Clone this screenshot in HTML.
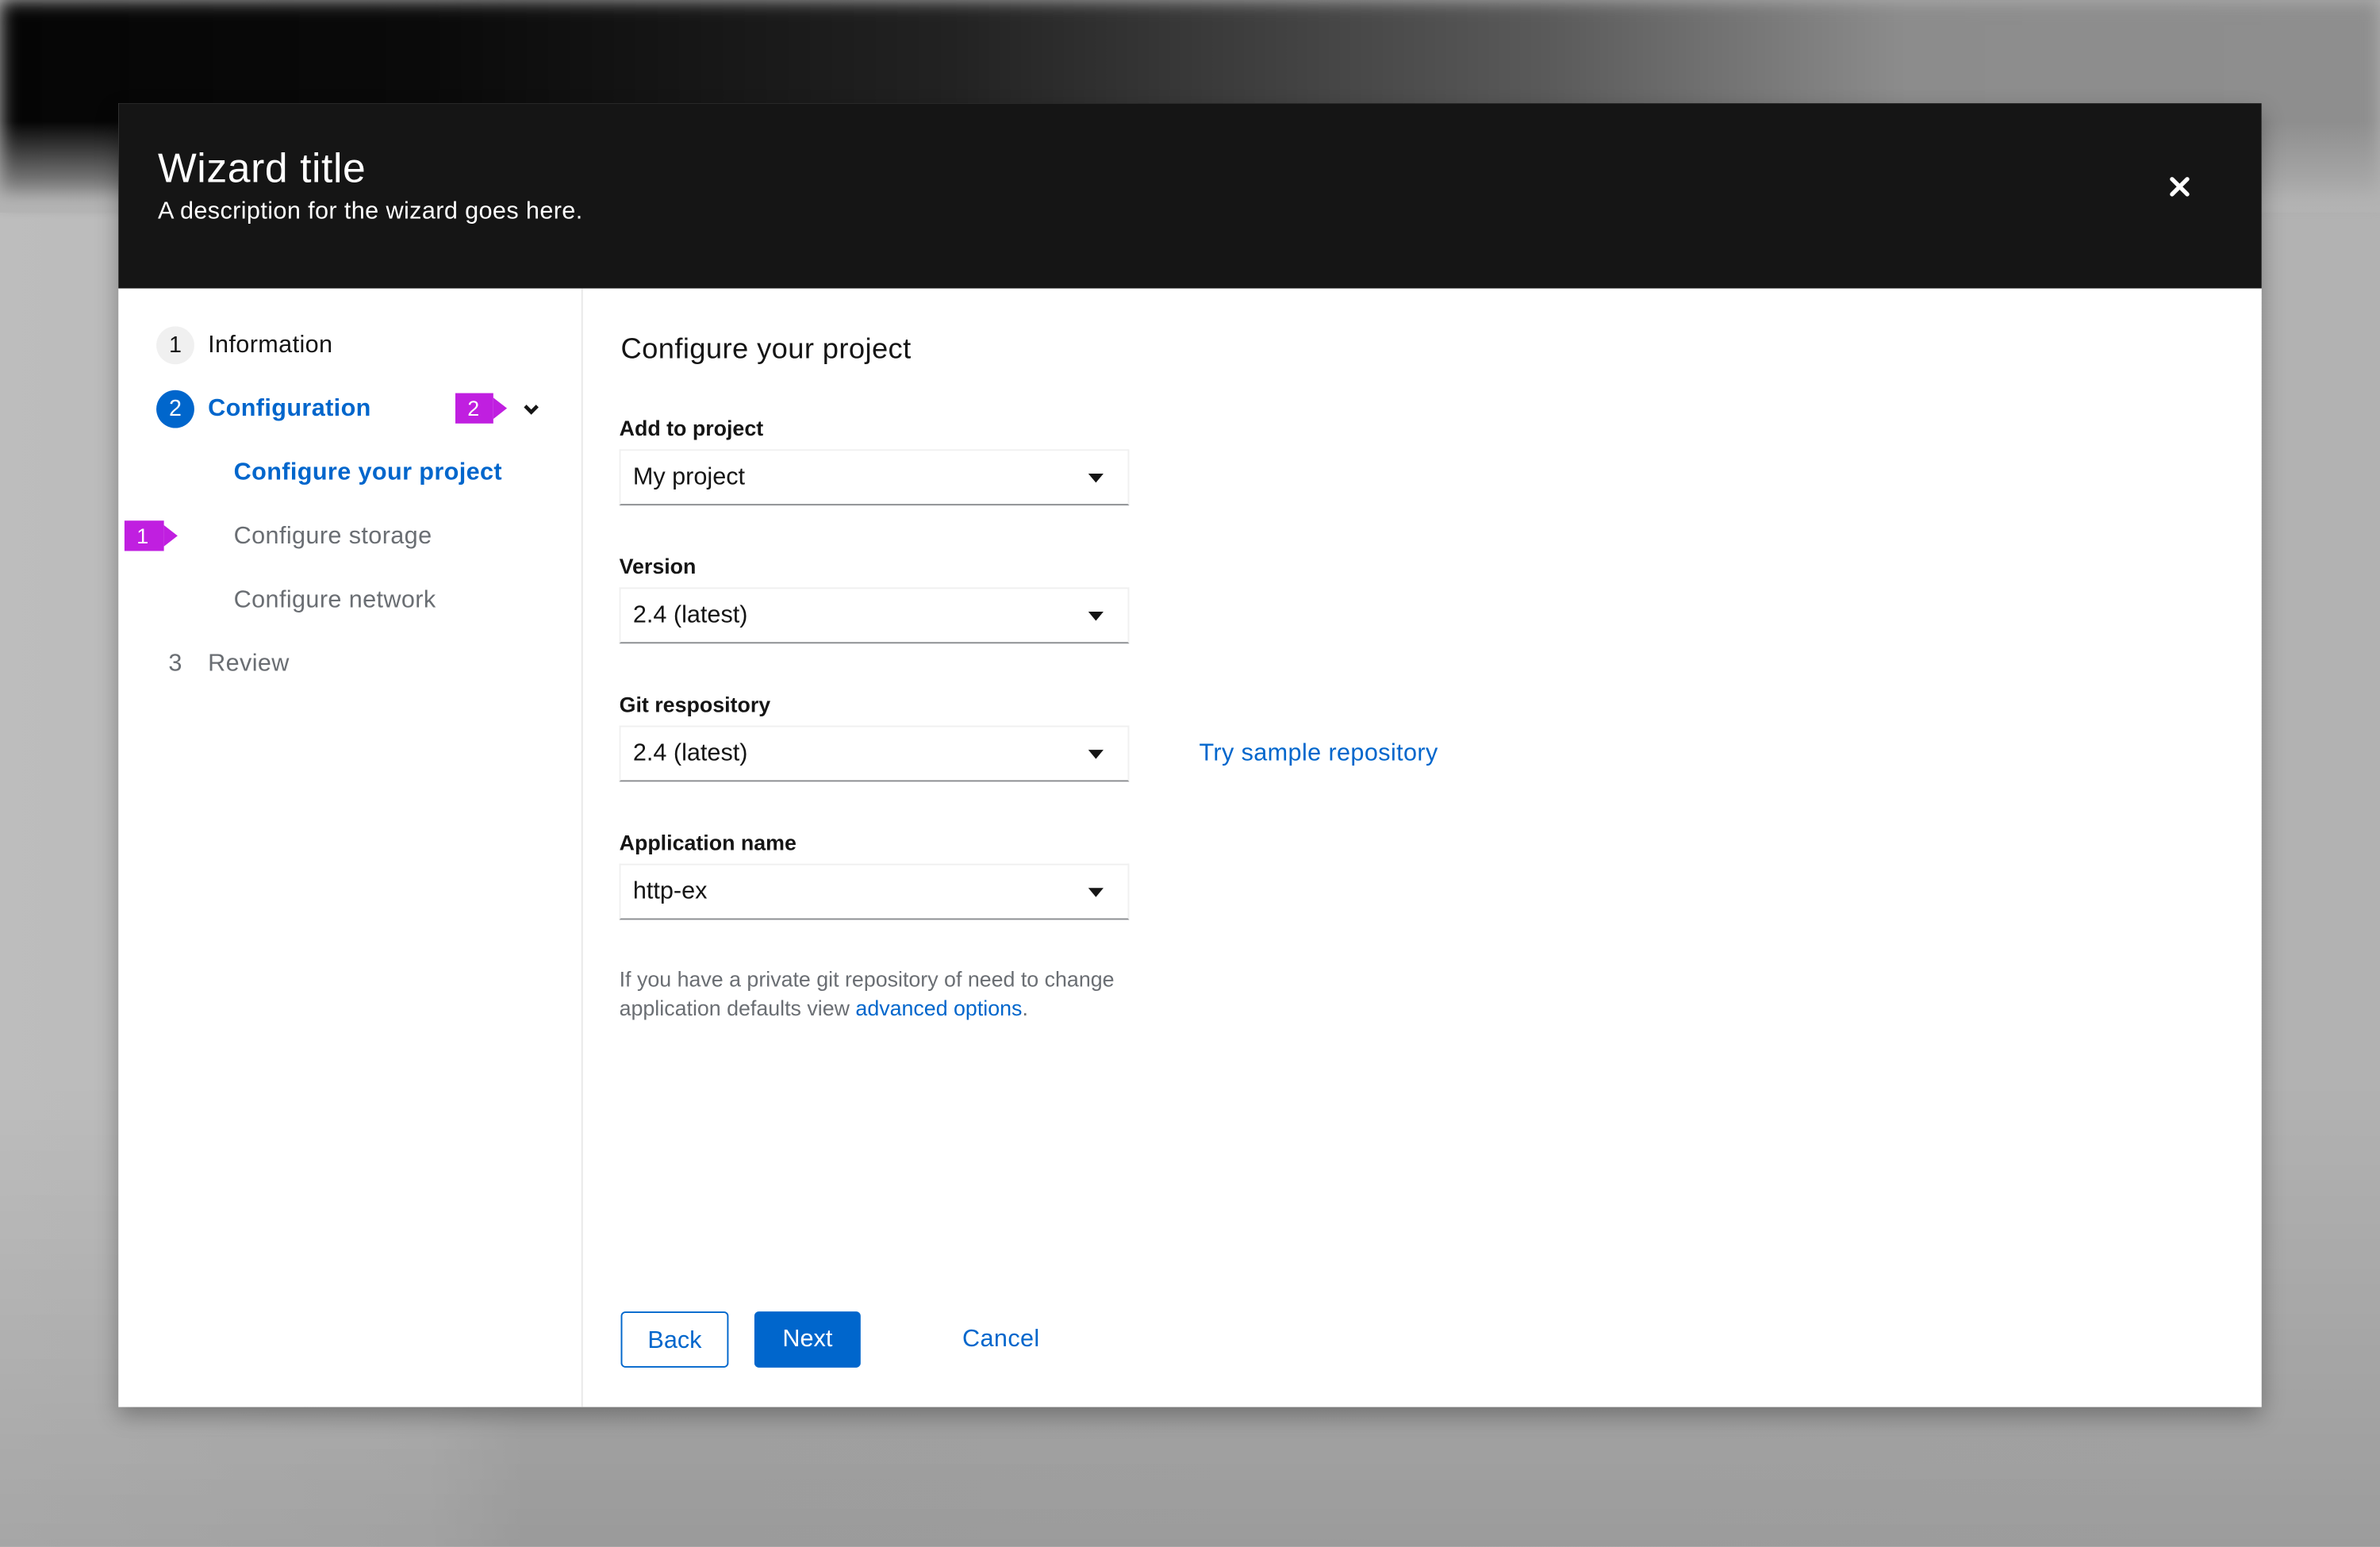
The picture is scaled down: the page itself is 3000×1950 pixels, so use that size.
<!DOCTYPE html>
<html><head><meta charset="utf-8"><style>
html,body{margin:0;padding:0;width:3000px;height:1950px;overflow:hidden;background:#b0b0b0}
#w{position:absolute;left:0;top:0;width:1568px;height:1019.2px;transform:scale(1.91327);transform-origin:0 0;font-family:"Liberation Sans",sans-serif;overflow:hidden;
background:linear-gradient(180deg,rgba(0,0,0,0) 0,rgba(0,0,0,0) 70%,rgba(0,0,0,.12) 100%),linear-gradient(90deg,#bdbdbd 0,#b8b8b8 18%,#b0b0b0 22%,#b2b2b2 100%)}
.topband{position:absolute;left:0;top:0;width:1568px;height:130px;background:linear-gradient(90deg,#050505 0,#0a0a0a 18%,#222 40%,#5a5a5a 65%,#8c8c8c 80%,#8e8e8e 100%);filter:blur(6px)}
.topfade{position:absolute;left:0;top:80px;width:1568px;height:60px;background:linear-gradient(180deg,rgba(176,176,176,0),#b3b3b3)}
.modal{position:absolute;left:78px;top:68px;width:1412px;height:859px;background:#fff;box-shadow:0 6px 14px rgba(0,0,0,.3)}
.hdr{position:absolute;left:0;top:0;width:1412px;height:122px;background:#151515;color:#fff}
.hdr h1{position:absolute;left:26px;top:28px;margin:0;font-weight:normal;font-size:27px;letter-spacing:.3px}
.hdr p{position:absolute;left:26px;top:63px;margin:0;font-size:16px;letter-spacing:.2px}
.x{position:absolute;left:1350px;top:47px;width:16px;height:16px}
.nav{position:absolute;left:0;top:122px;width:305px;height:737px;border-right:1px solid #e8e8e8}
.t{position:absolute;font-size:16px;white-space:nowrap;letter-spacing:.2px}
.c{position:absolute;width:25px;height:25px;border-radius:50%;font-size:15px;text-align:center;line-height:25px}
.badge{position:absolute;height:20px;background:#c01fe0;color:#fff;font-size:14px;line-height:20px;padding-left:8px;box-sizing:border-box}
.badge:after{content:"";position:absolute;right:-9px;top:3px;border-left:9px solid #c01fe0;border-top:7px solid transparent;border-bottom:7px solid transparent}
.lbl{position:absolute;left:330px;font-size:14px;font-weight:bold;color:#151515}
.sel{position:absolute;left:330px;width:336px;height:37px;box-sizing:border-box;border:1px solid #f0f0f0;border-bottom:1px solid #8a8d90;font-size:16px;color:#151515;line-height:35px;padding-left:8px}
.sel:after{content:"";position:absolute;right:16px;top:15px;border-top:6px solid #151515;border-left:5px solid transparent;border-right:5px solid transparent}
.btn{position:absolute;top:796px;height:37px;box-sizing:border-box;border-radius:3px;font-size:16px;line-height:37px;text-align:center}
</style></head><body><div id="w">
<div class="topband"></div><div class="topfade"></div>
<div class="modal">
 <div class="hdr"><h1>Wizard title</h1><p>A description for the wizard goes here.</p>
  <svg class="x" viewBox="0 0 16 16"><path d="M3 3L13 13M13 3L3 13" stroke="#fff" stroke-width="2.8" stroke-linecap="round"/></svg></div>
 <div class="nav">
  <div class="c" style="left:25px;top:25px;background:#f0f0f0;color:#151515">1</div>
  <div class="t" style="left:59px;top:29px;color:#151515">Information</div>
  <div class="c" style="left:25px;top:67px;background:#0066cc;color:#fff">2</div>
  <div class="t" style="left:59px;top:71px;color:#0066cc;font-weight:bold">Configuration</div>
  <div class="badge" style="left:222px;top:69px;width:25px">2</div>
  <svg style="position:absolute;left:266px;top:75px" width="12" height="10" viewBox="0 0 12 10"><path d="M2 2.5L6 6.5L10 2.5" stroke="#151515" stroke-width="2.4" fill="none"/></svg>
  <div class="t" style="left:76px;top:113px;color:#0066cc;font-weight:bold">Configure your project</div>
  <div class="badge" style="left:4px;top:153px;width:26px">1</div>
  <div class="t" style="left:76px;top:155px;color:#6a6e73">Configure storage</div>
  <div class="t" style="left:76px;top:197px;color:#6a6e73">Configure network</div>
  <div class="t" style="left:33px;top:239px;color:#6a6e73">3</div>
  <div class="t" style="left:59px;top:239px;color:#6a6e73">Review</div>
 </div>
 <div class="t" style="left:331px;top:152px;font-size:19px;color:#151515">Configure your project</div>
 <div class="lbl" style="top:206px">Add to project</div>
 <div class="sel" style="top:228px">My project</div>
 <div class="lbl" style="top:297px">Version</div>
 <div class="sel" style="top:319px">2.4 (latest)</div>
 <div class="lbl" style="top:388px">Git respository</div>
 <div class="sel" style="top:410px">2.4 (latest)</div>
 <div class="t" style="left:712px;top:420px;color:#0066cc">Try sample repository</div>
 <div class="lbl" style="top:479px">Application name</div>
 <div class="sel" style="top:501px">http-ex</div>
 <div style="position:absolute;left:330px;top:568px;font-size:14px;line-height:19px;color:#6a6e73;width:360px">If you have a private git repository of need to change application defaults view <span style="color:#0066cc">advanced options</span>.</div>
 <div class="btn" style="left:331px;width:71px;border:1px solid #0066cc;color:#0066cc">Back</div>
 <div class="btn" style="left:419px;width:70px;background:#0066cc;color:#fff">Next</div>
 <div class="t" style="left:556px;top:806px;color:#0066cc">Cancel</div>
</div>
</div></body></html>
